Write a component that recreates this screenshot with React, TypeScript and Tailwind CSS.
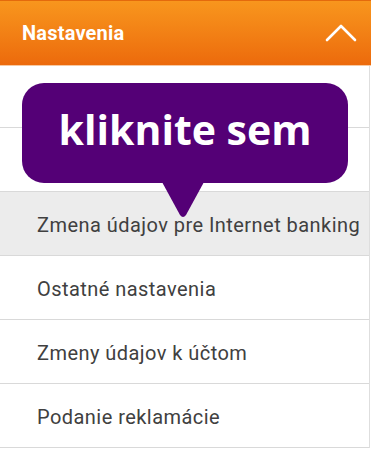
import React from "react";

const items = [
  { label: "", active: false },
  { label: "", active: false },
  { label: "Zmena údajov pre Internet banking", active: true },
  { label: "Ostatné nastavenia", active: false },
  { label: "Zmeny údajov k účtom", active: false },
  { label: "Podanie reklamácie", active: false },
];

export default function App() {
  return (
    <div className="relative w-[371px] h-[451px] bg-white overflow-hidden font-['Roboto',sans-serif]">
      {/* Header */}
      <div className="h-[65px] border-t border-[#e46a0c] bg-gradient-to-b from-[#f8961d] to-[#ec6a0c] flex items-center justify-between pl-[22px] pr-[14px]">
        <span className="text-white font-bold text-[20px] tracking-[0.2px] pb-[1px]">Nastavenia</span>
        <svg width="32" height="18" viewBox="0 0 32 18" fill="none">
          <path d="M2 16 L16 2 L30 16" stroke="white" strokeWidth="2.6" strokeLinecap="round" strokeLinejoin="round" />
        </svg>
      </div>
      <div className="h-px bg-[#f6c9a2]" />

      {/* List */}
      <div className="border-r border-[#dedede] w-[370px]">
        {items.map((item, i) => (
          <div
            key={i}
            className={
              "flex items-center pl-[37px] pt-[3px] border-b border-[#d9d9d9] text-[20px] tracking-[0.45px] text-[#404040] whitespace-nowrap " +
              (i === 0 ? "h-[62px] " : "h-[64px] ") +
              (item.active ? "bg-[#ececec]" : "bg-white")
            }
          >
            {item.label}
          </div>
        ))}
      </div>

      {/* Tooltip bubble */}
      <div className="absolute left-[22px] top-[83px] w-[326px] h-[100px] rounded-[22px] bg-[#540076] flex items-center justify-center">
        <span className="text-white font-bold text-[41px] leading-none font-['Open_Sans',sans-serif] pb-[8px]">kliknite sem</span>
      </div>
      <svg className="absolute left-[162px] top-[182px]" width="42" height="36" viewBox="0 0 42 36">
        <path d="M0 0 L42 0 L24 33 Q21 37 18 33 Z" fill="#540076" />
      </svg>
    </div>
  );
}
